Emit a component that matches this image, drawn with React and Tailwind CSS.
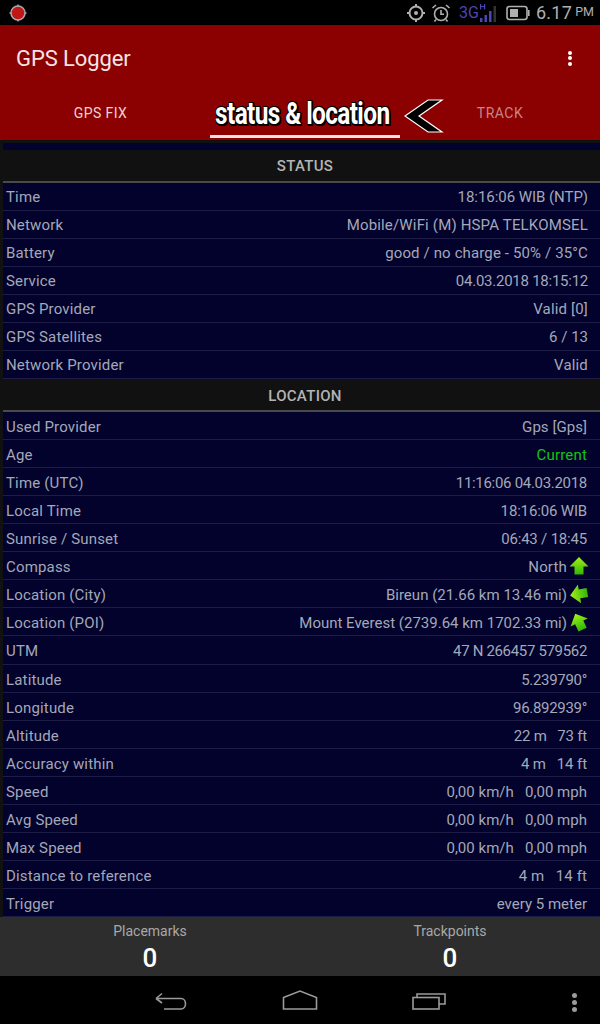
const statusRows = [
  { l: "Time", v: "18:16:06 WIB (NTP)", tr: "tracking-[-0.05px]" },
  { l: "Network", v: "Mobile/WiFi (M) HSPA TELKOMSEL", tr: "tracking-[0.17px]" },
  { l: "Battery", v: "good / no charge - 50% / 35°C", tr: "tracking-[0.13px]" },
  { l: "Service", v: "04.03.2018 18:15:12", tr: "tracking-[-0.25px]" },
  { l: "GPS Provider", v: "Valid [0]", tr: "tracking-[0.17px]" },
  { l: "GPS Satellites", v: "6 / 13", tr: "tracking-[0px]" },
  { l: "Network Provider", v: "Valid", tr: "tracking-[0.17px]" },
];

const locationRows = [
  { l: "Used Provider", v: "Gps [Gps]", tr: "tracking-[0.05px]" },
  { l: "Age", v: "Current", tone: "green", tr: "tracking-[0.17px]" },
  { l: "Time (UTC)", v: "11:16:06 04.03.2018", tr: "tracking-[-0.3px]" },
  { l: "Local Time", v: "18:16:06 WIB", tr: "tracking-[-0.16px]" },
  { l: "Sunrise / Sunset", v: "06:43 / 18:45", tr: "tracking-[-0.2px]" },
  { l: "Compass", v: "North", rotate: 0, tr: "tracking-[0.17px]" },
  { l: "Location (City)", v: "Bireun (21.66 km 13.46 mi)", rotate: -100, tr: "tracking-[0.02px]" },
  { l: "Location (POI)", v: "Mount Everest (2739.64 km 1702.33 mi)", rotate: -25, tr: "tracking-[0px]" },
  { l: "UTM", v: "47 N 266457 579562", tall: true, tr: "tracking-[-0.33px]" },
  { l: "Latitude", v: "5.239790°", tr: "tracking-[-0.3px]" },
  { l: "Longitude", v: "96.892939°", tr: "tracking-[-0.3px]" },
  { l: "Altitude", v: "22 m   73 ft", tr: "tracking-[-0.2px]" },
  { l: "Accuracy within", v: "4 m   14 ft", tr: "tracking-[-0.1px]" },
  { l: "Speed", v: "0,00 km/h   0,00 mph", tr: "tracking-[0.02px]" },
  { l: "Avg Speed", v: "0,00 km/h   0,00 mph", tr: "tracking-[0.02px]" },
  { l: "Max Speed", v: "0,00 km/h   0,00 mph", tr: "tracking-[0.02px]" },
  { l: "Distance to reference", v: "4 m   14 ft", tr: "tracking-[0.1px]" },
  { l: "Trigger", v: "every 5 meter", tr: "tracking-[0px]" },
];

function Arrow({ rotate }) {
  return (
    <svg width="20" height="20" viewBox="0 0 20 20" className="ml-[2px] shrink-0" style={{ transform: `rotate(${rotate}deg)` }}>
      <defs>
        <linearGradient id="arrowFill" x1="0" y1="0" x2="0" y2="1">
          <stop offset="0" stopColor="#a4f01a" />
          <stop offset="1" stopColor="#2fb806" />
        </linearGradient>
      </defs>
      <path d="M10 1 L19.5 10.5 L14.5 10.5 L14.5 18.5 L5.5 18.5 L5.5 10.5 L0.5 10.5 Z" fill="url(#arrowFill)" />
    </svg>
  );
}

function Row({ l, v, tone, rotate, tall, tr, location }) {
  return (
    <div className={`${tall ? "h-[29px]" : "h-[28px]"} ${location ? "pr-[13px] pt-[3px]" : "pr-[12px] pt-[2px]"} shrink-0 flex items-center justify-between border-b border-[#1c1c44] pl-[3px] bg-[#02022c] text-[15px] leading-none whitespace-pre`}>
      <span className="text-[#a4a8b8] tracking-[0.17px]">{l}</span>
      <span className="flex items-center">
        <span className={`${tr} ${tone === "green" ? "text-[#12c512]" : "text-[#a4a8b8]"}`}>{v}</span>
        {rotate !== undefined && <span className="-mr-[2px] -mt-[2px] flex"><Arrow rotate={rotate} /></span>}
      </span>
    </div>
  );
}

function Header({ children, className }) {
  return (
    <div className={`h-[33px] shrink-0 flex items-center justify-center bg-[#111111] border-b-2 border-[#4a4a4a] pl-[7px] text-[15px] tracking-[0.3px] font-medium text-[#b4b4b4] ${className}`}>
      {children}
    </div>
  );
}

export default function App() {
  return (
    <div className="w-[600px] h-[1024px] overflow-hidden flex flex-col bg-black" style={{ fontFamily: "Roboto, sans-serif" }}>
      {/* status bar */}
      <div className="h-[25px] bg-black flex items-center justify-between pl-[9px] pr-[6px] shrink-0">
        <svg width="18" height="18" viewBox="0 0 18 18">
          <circle cx="9" cy="9" r="7" fill="#c01616" stroke="#a8a8a8" strokeWidth="1.5" />
          <path d="M9 0.5V2.5M9 15.5V17.5M0.5 9H2.5M15.5 9H17.5" stroke="#a8a8a8" strokeWidth="1.5" />
        </svg>
        <div className="flex items-center text-[#b0b0b0]">
          <svg width="20" height="20" viewBox="0 0 20 20" fill="none" stroke="#b0b0b0" strokeWidth="2">
            <circle cx="10" cy="10" r="6.5" />
            <circle cx="10" cy="10" r="2" fill="#b0b0b0" stroke="none" />
            <path d="M10 1V3.5M10 16.5V19M1 10H3.5M16.5 10H19" />
          </svg>
          <svg width="20" height="20" viewBox="0 0 20 20" fill="none" stroke="#b0b0b0" strokeWidth="1.6" className="ml-[5px]">
            <circle cx="10" cy="11" r="6.5" />
            <path d="M10 7V11.3H13M1.5 5L5 2M18.5 5L15 2M5 16.5L3.5 18.5M15 16.5L16.5 18.5" />
          </svg>
          <span className="ml-[8px] text-[16px] leading-none text-[#4a46b4]">3G</span>
          <svg width="19" height="20" viewBox="0 0 19 20">
            <path d="M1 1h1.2v5.5h-1.2zM5 1h1.2v5.5h-1.2zM2 3h3v1h-3z" fill="#4a46b4" />
            <rect x="1" y="15" width="2.5" height="4" fill="#4a46b4" />
            <rect x="5.5" y="12" width="2.5" height="7" fill="#4a46b4" />
            <rect x="10" y="8" width="2.5" height="11" fill="#4a46b4" />
            <rect x="14.5" y="3" width="2.5" height="16" fill="#333333" />
          </svg>
          <svg width="24" height="16" viewBox="0 0 24 16" fill="none" className="ml-[8px]">
            <rect x="1" y="1.5" width="20" height="13" rx="2.5" stroke="#b0b0b0" strokeWidth="1.6" />
            <rect x="4" y="4" width="8" height="8" fill="#b0b0b0" />
            <rect x="22" y="5" width="1.6" height="6" fill="#b0b0b0" />
          </svg>
          <span className="ml-[6px] text-[18px] leading-none tracking-[0.3px]">6.17</span>
          <span className="ml-[3px] text-[12.5px] leading-none">PM</span>
        </div>
      </div>

      {/* app bar */}
      <div className="h-[115px] shrink-0 bg-[#8b0000] flex flex-col">
        <div className="h-[66px] flex items-center justify-between pl-[16px] pr-[28px]">
          <span className="text-[22px] text-[#f4e4e4] leading-none pt-[2px] tracking-[-0.1px]">GPS Logger</span>
          <span className="flex flex-col gap-[1.5px]">
            <span className="w-[4px] h-[4px] rounded-full bg-white" />
            <span className="w-[4px] h-[4px] rounded-full bg-white" />
            <span className="w-[4px] h-[4px] rounded-full bg-white" />
          </span>
        </div>
        <div className="flex-1 grid grid-cols-[210px_190px_200px]">
          <div className="flex items-center justify-center pb-[4px] text-[14px] tracking-[0.4px] text-[#ecd4d4]">
            <span className="mr-[9px]">GPS FIX</span>
          </div>
          <div className="relative flex items-center justify-center border-b-[3px] border-[#f0e0e0] mb-[2px]">
            <span
              className="text-[32px] leading-none font-bold text-white tracking-[-0.8px] whitespace-nowrap mr-[5px]"
              style={{ transform: "scaleX(0.763)", textShadow: "2px 2px 0 #000, -1px -1px 0 #000, 1px -1px 0 #000, -1px 1px 0 #000, 2px 0 0 #000, 0 2px 0 #000" }}
            >
              status &amp; location
            </span>
          </div>
          <div className="relative flex items-center justify-center pb-[4px] text-[14px] tracking-[0.5px] text-[#c88484]">
            <svg width="40" height="34" viewBox="0 0 40 34" className="absolute left-[4px] top-[8px]">
              <path d="M1 17 L24 1 L38 1 L15 17 L38 33 L24 33 Z" fill="#000" stroke="#fff" strokeWidth="1.2" />
            </svg>
            <span>TRACK</span>
          </div>
        </div>
      </div>

      {/* content */}
      <div className="flex-1 min-h-0 bg-[#111111] pt-[3px] pl-[3px] flex flex-col">
        <div className="h-[7px] bg-[#02022c] shrink-0" />
        <Header className="pt-[2px]">STATUS</Header>
        {statusRows.map((r) => <Row key={r.l} {...r} />)}
        <Header className="pt-[3px]">LOCATION</Header>
        {locationRows.map((r) => <Row key={r.l} {...r} location />)}
      </div>

      {/* totals */}
      <div className="h-[59px] shrink-0 bg-[#2d2d2d] grid grid-cols-2">
        <div className="flex flex-col items-center pt-[6px]">
          <span className="text-[14px] leading-[16px] text-[#a8a8a8]">Placemarks</span>
          <span className="text-[26px] leading-[28px] mt-[5px] font-medium text-white">0</span>
        </div>
        <div className="flex flex-col items-center pt-[6px]">
          <span className="text-[14px] leading-[16px] text-[#a8a8a8]">Trackpoints</span>
          <span className="text-[26px] leading-[28px] mt-[5px] font-medium text-white">0</span>
        </div>
      </div>

      {/* nav bar */}
      <div className="h-[48px] shrink-0 bg-black relative flex items-center justify-center">
        <div className="flex items-center gap-[94px] pr-[1px]">
          <svg width="34" height="24" viewBox="0 0 34 24" fill="none" stroke="#9a9a9a" strokeWidth="1.6">
            <path d="M2 10.5H27C33 10.5 33 21 27 21H10M2 10.5L8 5.5M2 10.5L8 15" />
          </svg>
          <svg width="36" height="24" viewBox="0 0 36 24" fill="none" stroke="#9a9a9a" strokeWidth="1.6">
            <path d="M1.5 9.5L18 3L34.5 9.5V21H1.5Z" />
          </svg>
          <svg width="34" height="24" viewBox="0 0 34 24" fill="none" stroke="#9a9a9a" strokeWidth="1.6">
            <rect x="1" y="9.5" width="26" height="11.5" />
            <path d="M5 9V6H33V16H27" />
          </svg>
        </div>
        <span className="absolute right-[23px] top-[17px] flex flex-col gap-[2px]">
          <span className="w-[5px] h-[5px] rounded-full bg-[#9a9a9a]" />
          <span className="w-[5px] h-[5px] rounded-full bg-[#9a9a9a]" />
          <span className="w-[5px] h-[5px] rounded-full bg-[#9a9a9a]" />
        </span>
      </div>
    </div>
  );
}
